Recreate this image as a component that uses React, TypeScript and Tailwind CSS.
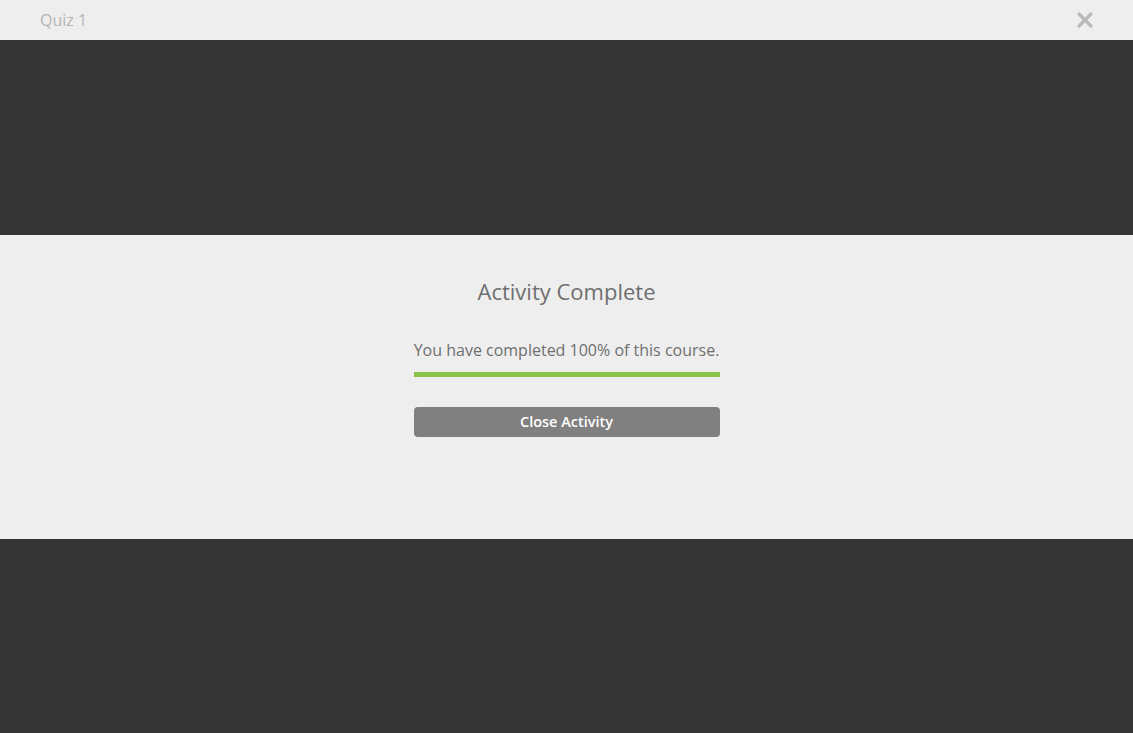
import { X } from 'lucide-react';

export default function App() {
  const percent = 100;

  return (
    <div className="flex h-[733px] w-full flex-col bg-[#353535] font-['Open_Sans',sans-serif]">
      {/* Header */}
      <div className="flex h-[40px] shrink-0 items-center justify-between bg-[#eeeeee] pl-[40px] pr-[36px]">
        <span className="text-[16px] text-[#b5b5b5]">Quiz 1</span>
        <button className="text-[#b9b9b9]" title="Close">
          <X className="h-[24px] w-[24px]" strokeWidth={3.2} />
        </button>
      </div>

      <div className="flex-1" />

      {/* Completion panel */}
      <div className="flex h-[304px] shrink-0 flex-col items-center bg-[#eeeeee] pt-[41px]">
        <h1 className="text-[22px] leading-[30px] text-[#6f6f6f]">Activity Complete</h1>
        <div className="mt-[33px] flex w-[306px] flex-col">
          <p className="whitespace-nowrap text-center text-[16px] leading-[22px] text-[#6f6f6f]">
            You have completed {percent}% of this course.
          </p>
          <div className="mt-[11px] h-[5px] w-full bg-[#dddddd]">
            <div className="h-full bg-[#8bc34a]" style={{ width: `${percent}%` }} />
          </div>
          <button className="mt-[30px] h-[30px] w-full rounded-[4px] bg-[#808080] text-[14.5px] font-semibold text-white">
            Close Activity
          </button>
        </div>
      </div>

      <div className="flex-1" />
    </div>
  );
}
